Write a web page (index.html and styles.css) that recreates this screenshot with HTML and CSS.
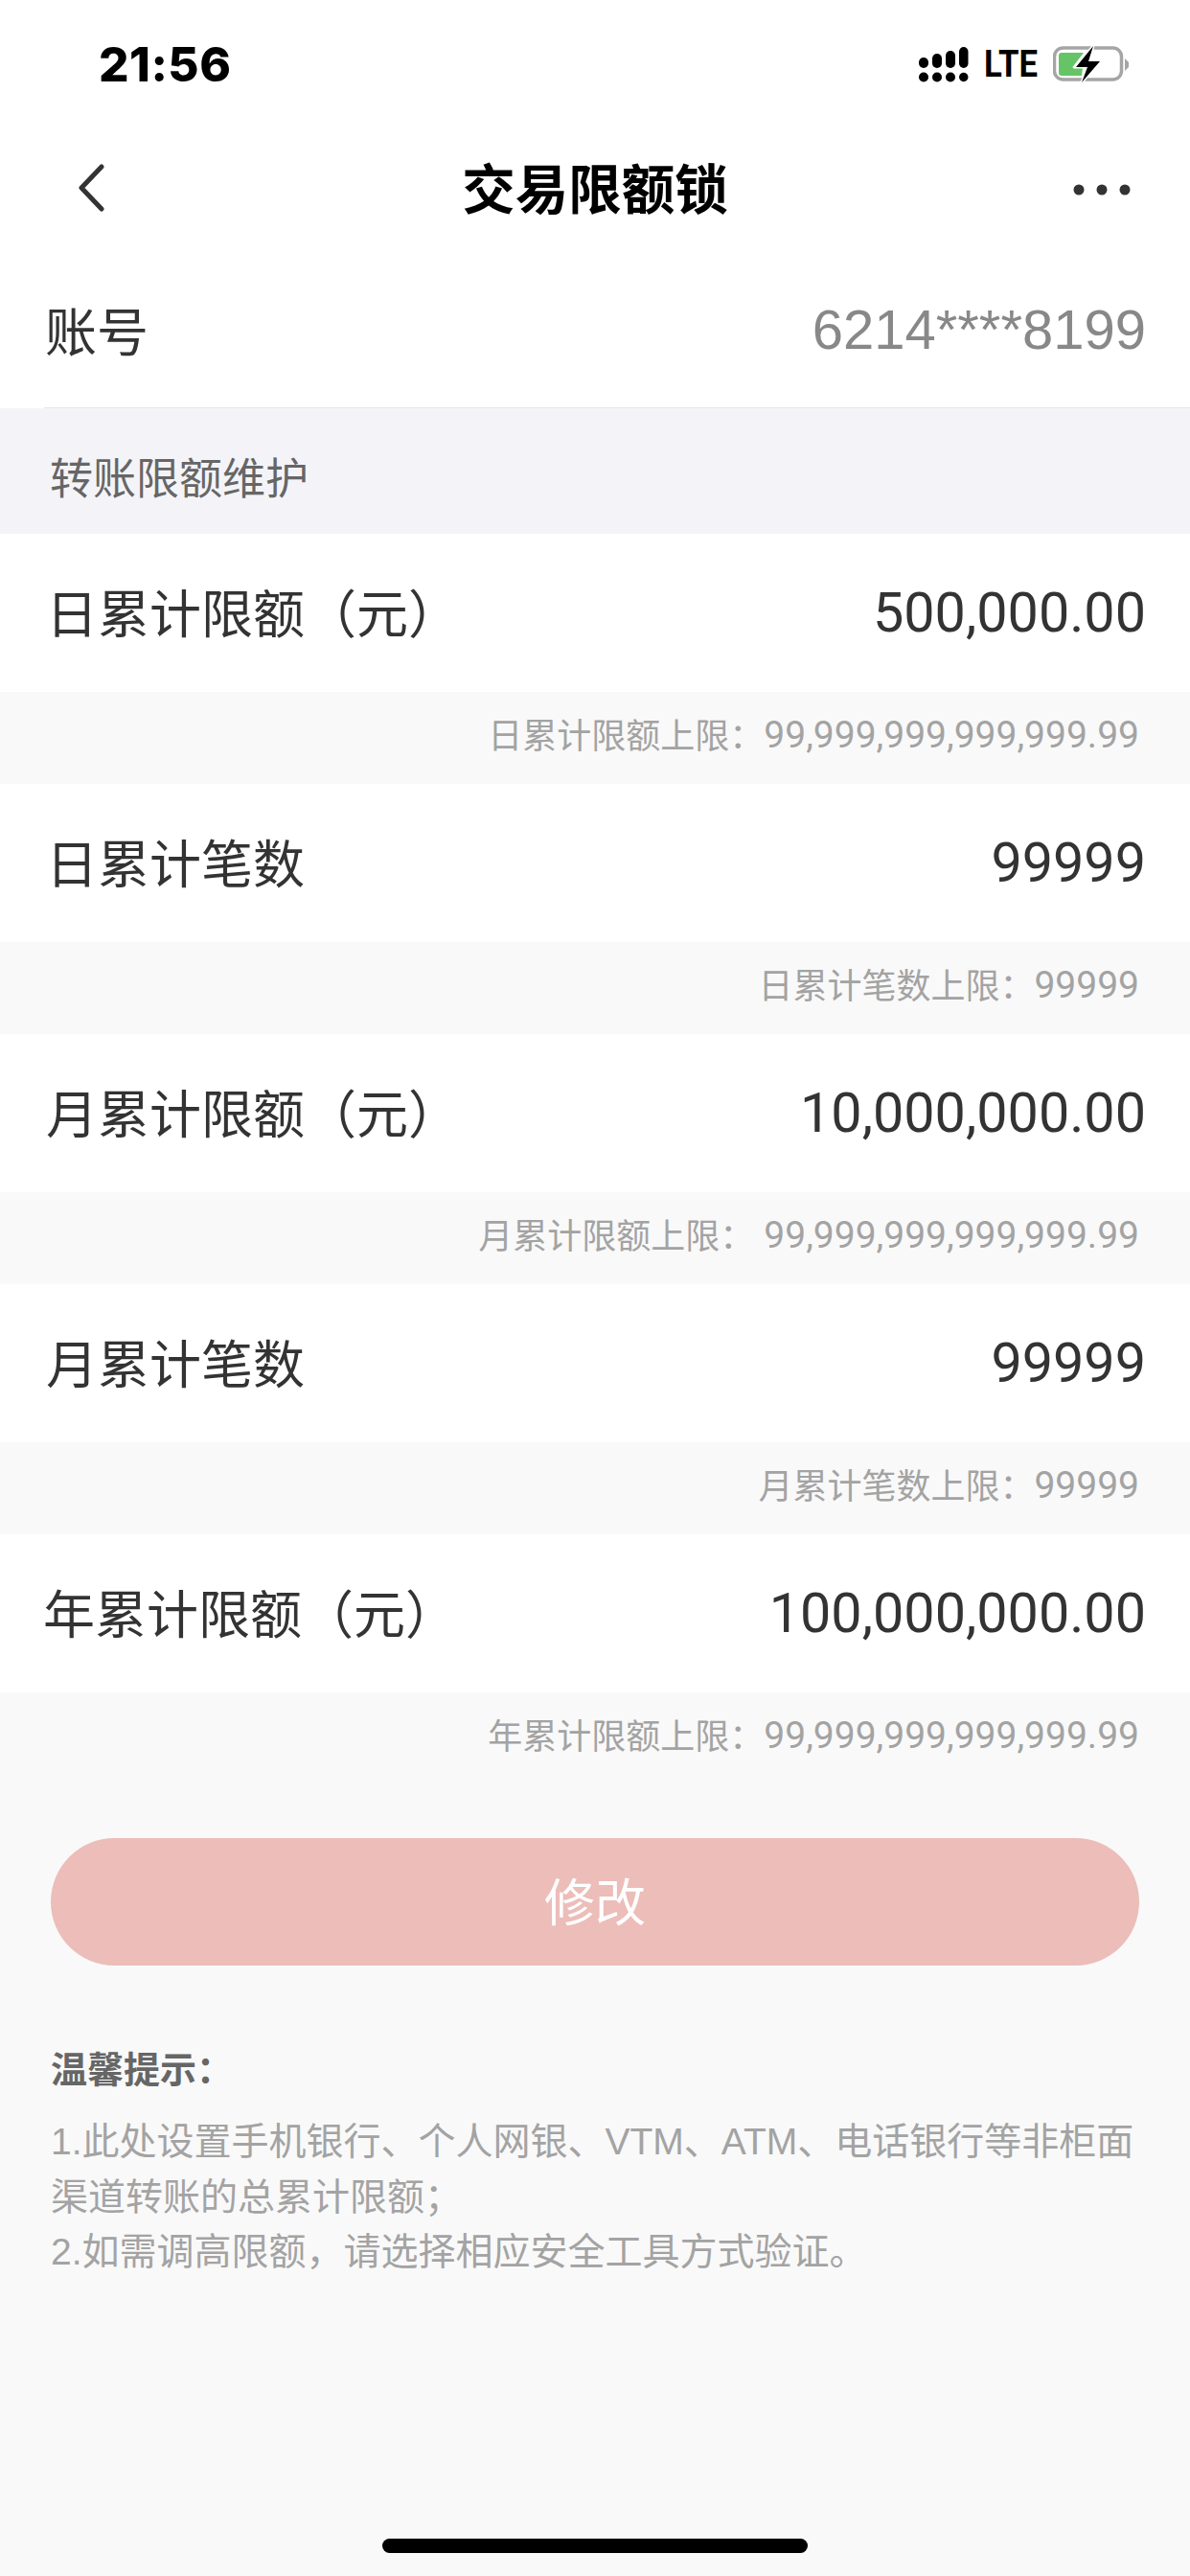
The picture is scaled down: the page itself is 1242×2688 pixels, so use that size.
FILE: index.html
```html
<!DOCTYPE html>
<html lang="zh-CN">
<head>
<meta charset="utf-8">
<title>交易限额锁</title>
<link rel="stylesheet" href="styles.css">
</head>
<body>
<div class="page">
  <header class="status">
    <span class="time">21:56</span>
    <div class="status-icons">
      <svg class="signal" width="52" height="37" viewBox="0 0 52 37">
        <g fill="#000">
          <rect x="0" y="11" width="10" height="11" rx="5"/>
          <rect x="14" y="7" width="10" height="15" rx="5"/>
          <rect x="28" y="4" width="10" height="18" rx="5"/>
          <rect x="42" y="0" width="9.5" height="22" rx="4.75"/>
          <circle cx="5" cy="31.5" r="5"/>
          <circle cx="19" cy="31.5" r="5"/>
          <circle cx="33" cy="31.5" r="5"/>
          <circle cx="46.75" cy="31.5" r="4.75"/>
        </g>
      </svg>
      <span class="lte">LTE</span>
      <svg class="battery" width="79" height="39" viewBox="0 0 79 39">
        <rect x="1.5" y="2" width="70" height="33" rx="9" fill="none" stroke="#a5a5a5" stroke-width="3.5"/>
        <path d="M75 13l4 4v5l-4 4z" fill="#a5a5a5"/>
        <path d="M9 7h23L20 22.500h11l-1 8.500H9a3 3 0 0 1-3-3V10a3 3 0 0 1 3-3z" fill="#65c466"/>
        <path d="M42 0L24 22h12l-6 16 19-22H37z" fill="#000" stroke="#fff" stroke-width="3" paint-order="stroke"/>
      </svg>
    </div>
  </header>

  <nav class="navbar">
    <svg class="back" width="32" height="50" viewBox="0 0 32 50">
      <path d="M27 3L6 25l21 22" fill="none" stroke="#333" stroke-width="5" stroke-linecap="round" stroke-linejoin="round"/>
    </svg>
    <h1 class="title">交易限额锁</h1>
    <svg class="more" width="60" height="12" viewBox="0 0 60 12">
      <circle cx="6" cy="6" r="5.5" fill="#333"/>
      <circle cx="30" cy="6" r="5.5" fill="#333"/>
      <circle cx="54" cy="6" r="5.5" fill="#333"/>
    </svg>
  </nav>

  <section class="account">
    <span class="account-label">账号</span>
    <span class="account-value">6214****8199</span>
  </section>

  <div class="section-title">转账限额维护</div>

  <div class="row"><span class="label">日累计限额（元）</span><span class="value">500,000.00</span></div>
  <div class="hint"><span class="hint-label">日累计限额上限：</span><span class="hint-num">99,999,999,999,999.99</span></div>

  <div class="row"><span class="label">日累计笔数</span><span class="value">99999</span></div>
  <div class="hint"><span class="hint-label">日累计笔数上限：</span><span class="hint-num">99999</span></div>

  <div class="row"><span class="label">月累计限额（元）</span><span class="value">10,000,000.00</span></div>
  <div class="hint"><span class="hint-label hint-wide">月累计限额上限：</span><span class="hint-num">99,999,999,999,999.99</span></div>

  <div class="row"><span class="label">月累计笔数</span><span class="value">99999</span></div>
  <div class="hint"><span class="hint-label">月累计笔数上限：</span><span class="hint-num">99999</span></div>

  <div class="row"><span class="label label-year">年累计限额（元）</span><span class="value">100,000,000.00</span></div>
  <div class="hint"><span class="hint-label">年累计限额上限：</span><span class="hint-num">99,999,999,999,999.99</span></div>

  <button class="submit" type="button">修改</button>

  <section class="tips">
    <h2 class="tips-title">温馨提示：</h2>
    <p class="tips-text">1.此处设置手机银行、个人网银、VTM、ATM、电话银行等非柜面渠道转账的总累计限额；</p>
    <p class="tips-text">2.如需调高限额，请选择相应安全工具方式验证。</p>
  </section>

  <div class="home-bar"></div>
</div>
</body>
</html>
```

FILE: styles.css
```css
* {
  box-sizing: border-box;
}

html, body {
  margin: 0;
  padding: 0;
}

body {
  font-family: "Liberation Sans", "Noto Sans CJK SC", sans-serif;
  background: #f9f9f9;
}

.page {
  width: 1242px;
  height: 2688px;
  display: flex;
  flex-direction: column;
  background: #f9f9f9;
  overflow: hidden;
}

.status {
  height: 132px;
  flex: none;
  background: #fff;
  display: flex;
  align-items: center;
  justify-content: space-between;
  padding: 2px 64px 0 103px;
}

.time {
  font-family: "Inter", "Liberation Sans", sans-serif;
  font-weight: 800;
  font-size: 49.5px;
  color: #000;
  letter-spacing: 0.5px;
}

.status-icons {
  display: flex;
  align-items: center;
  gap: 16px;
}

.lte {
  font-family: "Roboto", "Liberation Sans", sans-serif;
  font-weight: 700;
  font-size: 39px;
  color: #000;
  line-height: 38px;
  width: 56px;
  white-space: nowrap;
  transform: scaleX(0.89);
  transform-origin: left center;
}

.navbar {
  height: 130px;
  flex: none;
  background: #fff;
  display: grid;
  grid-template-columns: 1fr auto 1fr;
  align-items: center;
  padding: 0 70px 4px;
}

.back {
  margin: 2px 0 0 9px;
}

.more {
  justify-self: end;
  margin: 6px -8px 0 0;
}

.title {
  margin: 0;
  font-size: 55.5px;
  font-weight: 700;
  color: #000;
  font-family: "Noto Sans CJK SC", sans-serif;
  line-height: 1;
}

.account {
  height: 164px;
  flex: none;
  background: #fff;
  display: flex;
  align-items: center;
  justify-content: space-between;
  padding: 0 46px 2px 47px;
  position: relative;
}

.account::after {
  content: "";
  position: absolute;
  left: 46px;
  right: 0;
  bottom: 0;
  height: 1px;
  background: #e6e6e6;
}

.account-label {
  font-size: 54px;
  color: #333;
}

.account-value {
  font-size: 58px;
  color: #888;
}

.section-title {
  height: 131px;
  flex: none;
  background: #f4f4f8;
  display: flex;
  align-items: center;
  padding: 10px 0 0 52px;
  font-size: 45px;
  color: #666;
}

.row {
  height: 165px;
  flex: none;
  background: #fff;
  display: flex;
  align-items: center;
  justify-content: space-between;
  padding: 0 46px 4px 48px;
}

.label {
  font-size: 54px;
  color: #333;
}

.label-year {
  margin-left: -3px;
}

.value {
  font-family: "Roboto", "Liberation Sans", sans-serif;
  font-size: 57.5px;
  color: #333;
  margin-top: 3px;
}

.hint {
  height: 96px;
  flex: none;
  display: flex;
  align-items: center;
  justify-content: flex-end;
  padding: 0 53px 6px 0;
  font-size: 36px;
  color: #a3a3a3;
}

.hint-label {
  margin-top: -4px;
}

.hint-num {
  font-family: "Roboto", "Liberation Sans", sans-serif;
  font-size: 39px;
}

.hint-wide {
  margin-right: 10px;
}

.submit {
  flex: none;
  width: 1136px;
  height: 133px;
  margin: 56px 0 0 53px;
  border: 0;
  border-radius: 67px;
  background: #ecbdb9;
  color: #fff;
  font-family: inherit;
  font-size: 53px;
  padding: 0 0 6px;
}

.tips {
  margin-top: 84px;
  padding: 0 53px;
}

.tips-title {
  margin: 0 0 21px;
  font-size: 38px;
  font-weight: 700;
  color: #666;
  line-height: 50px;
}

.tips-text {
  margin: 0;
  font-size: 39px;
  line-height: 57.5px;
  color: #a3a3a3;
}

.home-bar {
  width: 444px;
  height: 15px;
  border-radius: 7.5px;
  background: #000;
  margin: auto auto 24px;
  flex: none;
}
```
